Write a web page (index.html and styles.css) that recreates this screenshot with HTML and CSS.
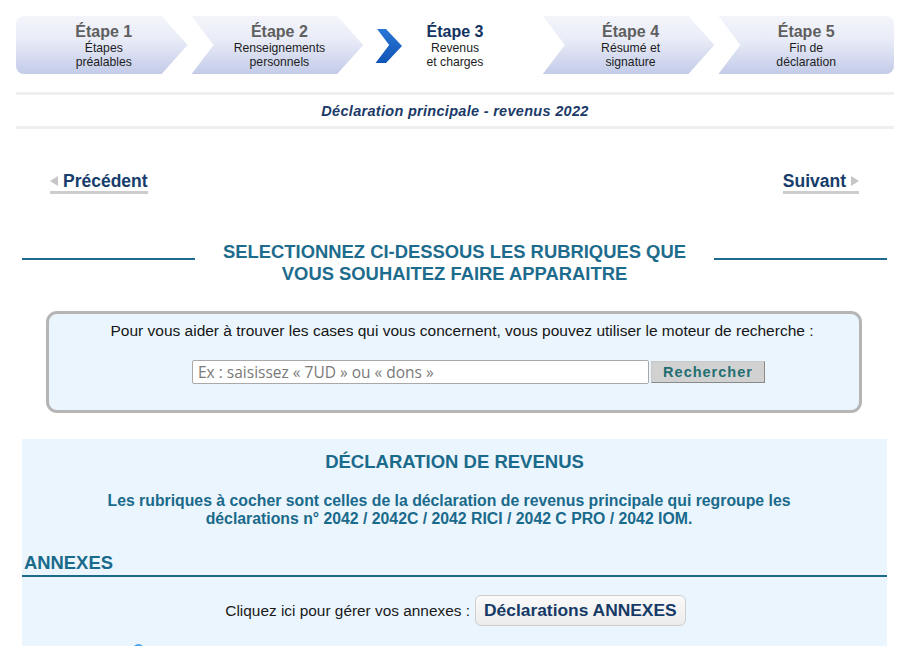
FILE: index.html
```html
<!DOCTYPE html>
<html lang="fr">
<head>
<meta charset="utf-8">
<title>Déclaration principale - revenus 2022</title>
<link rel="stylesheet" href="styles.css">
</head>
<body>
<nav class="stepper">
  <div class="step step-first">
    <span class="step-title">Étape 1</span>
    <span class="step-text">Étapes<br>préalables</span>
  </div>
  <div class="step">
    <span class="step-title">Étape 2</span>
    <span class="step-text">Renseignements<br>personnels</span>
  </div>
  <div class="step step-current">
    <svg class="current-icon" width="32" height="34" viewBox="0 0 32 34">
      <defs>
        <linearGradient id="cg" x1="0" y1="0" x2="0" y2="1">
          <stop offset="0" stop-color="#2a76d6"/>
          <stop offset="1" stop-color="#0f55b6"/>
        </linearGradient>
      </defs>
      <polygon points="0,0 15,0 31,17 15,34 0,34 16,17" fill="url(#cg)"/>
    </svg>
    <span class="step-title">Étape 3</span>
    <span class="step-text">Revenus<br>et charges</span>
  </div>
  <div class="step">
    <span class="step-title">Étape 4</span>
    <span class="step-text">Résumé et<br>signature</span>
  </div>
  <div class="step step-last">
    <span class="step-title">Étape 5</span>
    <span class="step-text">Fin de<br>déclaration</span>
  </div>
</nav>

<div class="subtitle-bar">Déclaration principale - revenus 2022</div>

<div class="nav-row">
  <a class="nav-link prev" href="#"><span class="tri tri-left"></span>Précédent</a>
  <a class="nav-link next" href="#">Suivant<span class="tri tri-right"></span></a>
</div>

<div class="section-heading">
  <span class="heading-line"></span>
  <h2 class="heading-text">SELECTIONNEZ CI-DESSOUS LES RUBRIQUES QUE<br>VOUS SOUHAITEZ FAIRE APPARAITRE</h2>
  <span class="heading-line"></span>
</div>

<div class="search-box">
  <p class="search-intro">Pour vous aider à trouver les cases qui vous concernent, vous pouvez utiliser le moteur de recherche :</p>
  <div class="search-row">
    <input class="search-input" type="text" placeholder="Ex : saisissez « 7UD » ou « dons »">
    <button class="search-btn" type="button">Rechercher</button>
  </div>
</div>

<section class="decl">
  <h3 class="decl-title">DÉCLARATION DE REVENUS</h3>
  <p class="decl-text">Les rubriques à cocher sont celles de la déclaration de revenus principale qui regroupe les<br>déclarations n° 2042 / 2042C / 2042 RICI / 2042 C PRO / 2042 IOM.</p>
  <h3 class="annex-title">ANNEXES</h3>
  <div class="annex-row">
    <span class="annex-label">Cliquez ici pour gérer vos annexes :</span>
    <button class="annex-btn" type="button">Déclarations ANNEXES</button>
  </div>
  <div class="blue-dot"></div>
</section>
</body>
</html>
```

FILE: styles.css
```css
* { box-sizing: border-box; }

body {
  margin: 0;
  font-family: "Liberation Sans", Arial, sans-serif;
  color: #222;
  background: #fff;
  overflow: hidden;
}

/* Stepper */
.stepper {
  display: flex;
  height: 58px;
  margin: 16px 12px 0 16px;
  border-radius: 8px;
  overflow: hidden;
}

.step {
  flex: 1 1 0;
  position: relative;
  display: flex;
  flex-direction: column;
  align-items: center;
  justify-content: flex-start;
  padding-top: 7px;
  background: linear-gradient(#f4f5fb 0%, #e9ecf7 40%, #c3cbe8 100%);
  clip-path: polygon(0 0, calc(100% - 30px) 0, calc(100% - 4px) 50%, calc(100% - 30px) 100%, 0 100%, 22px 50%);
}

.step-first {
  clip-path: polygon(0 0, calc(100% - 30px) 0, calc(100% - 4px) 50%, calc(100% - 30px) 100%, 0 100%);
}

.step-last {
  clip-path: polygon(0 0, 100% 0, 100% 100%, 0 100%, 22px 50%);
}

.step-current {
  background: #fff;
}

.step-title {
  font-size: 16px;
  font-weight: bold;
  line-height: 18px;
  color: #5f5f5f;
}

.step-text {
  font-size: 12.2px;
  line-height: 14px;
  text-align: center;
  color: #1e1e1e;
}

.step-current .step-title {
  color: #12325f;
}

.current-icon {
  position: absolute;
  left: 4px;
  top: 13px;
}

/* Subtitle bar */
.subtitle-bar {
  margin: 18px 12px 0 16px;
  height: 37px;
  border-top: 3px solid #efefef;
  border-bottom: 3px solid #efefef;
  display: flex;
  align-items: center;
  justify-content: center;
  font-size: 14.5px;
  font-weight: bold;
  font-style: italic;
  letter-spacing: 0.3px;
  color: #1c3a68;
}

/* Prev / next */
.nav-row {
  display: flex;
  justify-content: space-between;
  margin: 43px 47px 0 50px;
}

.nav-link {
  display: flex;
  align-items: center;
  gap: 5px;
  font-size: 17.5px;
  font-weight: bold;
  line-height: 18px;
  color: #173d6c;
  text-decoration: none;
  border-bottom: 3px solid #cdcdcd;
  padding-bottom: 1px;
}

.tri {
  width: 0;
  height: 0;
  border-top: 5px solid transparent;
  border-bottom: 5px solid transparent;
}

.tri-left { border-right: 8px solid #c6c6c6; }
.tri-right { border-left: 8px solid #c6c6c6; }

/* Section heading */
.section-heading {
  display: flex;
  align-items: flex-start;
  margin: 47px 19px 0 22px;
}

.heading-line {
  flex: 0 0 173px;
  height: 2px;
  margin-top: 17px;
  background: #1e6c8d;
}

.heading-text {
  flex: 1;
  margin: 0;
  text-align: center;
  font-size: 18.4px;
  line-height: 22px;
  font-weight: bold;
  color: #1e6c8d;
}

/* Search box */
.search-box {
  margin: 26px 44px 0 46px;
  height: 102px;
  border: 3px solid #b5b5b5;
  border-radius: 11px;
  background: #ebf5fe;
  padding: 8px 0 0;
}

.search-intro {
  margin: 0;
  padding-left: 16px;
  text-align: center;
  font-size: 15.5px;
  line-height: 18px;
  color: #151515;
}

.search-row {
  display: flex;
  justify-content: center;
  align-items: center;
  gap: 2px;
  margin-top: 20px;
  padding-left: 49px;
}

.search-input {
  width: 457px;
  height: 24px;
  border: 1px solid #a9a9a9;
  border-radius: 2px;
  padding: 0 5px;
  font-family: "Open Sans", "DejaVu Sans", sans-serif;
  font-size: 15.5px;
  background: #fff;
}

.search-input::placeholder {
  color: #7a7a7a;
}

.search-btn {
  width: 114px;
  height: 22px;
  border: 1px solid #c8c8c8;
  border-right-color: #8a8a8a;
  border-bottom-color: #8a8a8a;
  background: #d1d1d1;
  font-family: "Liberation Sans", Arial, sans-serif;
  font-size: 14.5px;
  font-weight: bold;
  letter-spacing: 1px;
  color: #236e72;
  padding: 0;
}

/* Declaration section */
.decl {
  margin: 26px 19px 0 22px;
  height: 300px;
  background: #ebf5fe;
  padding-top: 13px;
}

.decl-title {
  margin: 0;
  text-align: center;
  font-size: 18.5px;
  line-height: 20px;
  font-weight: bold;
  color: #1a6a8b;
}

.decl-text {
  margin: 20px 0 0;
  padding-right: 11px;
  text-align: center;
  font-size: 15.8px;
  line-height: 18px;
  font-weight: bold;
  color: #1a6a8b;
}

.annex-title {
  margin: 25px 0 0;
  padding: 0 0 2px 2px;
  font-size: 18.4px;
  line-height: 20px;
  font-weight: bold;
  color: #1a6a8b;
  border-bottom: 2px solid #1a6a8b;
}

.annex-row {
  display: flex;
  justify-content: center;
  align-items: center;
  gap: 5px;
  margin-top: 18px;
  padding-left: 2px;
}

.annex-label {
  font-size: 15.4px;
  color: #1a1a1a;
}

.annex-btn {
  height: 31px;
  padding: 0 8px;
  border: 1px solid #cfcfcf;
  border-radius: 6px;
  background: linear-gradient(#fafafa, #ececec);
  font-family: "Liberation Sans", Arial, sans-serif;
  font-size: 17.4px;
  font-weight: bold;
  color: #163a66;
}

.blue-dot {
  width: 11px;
  height: 11px;
  margin: 18px 0 0 111px;
  border-radius: 50%;
  background: #4aa0e6;
}
```
